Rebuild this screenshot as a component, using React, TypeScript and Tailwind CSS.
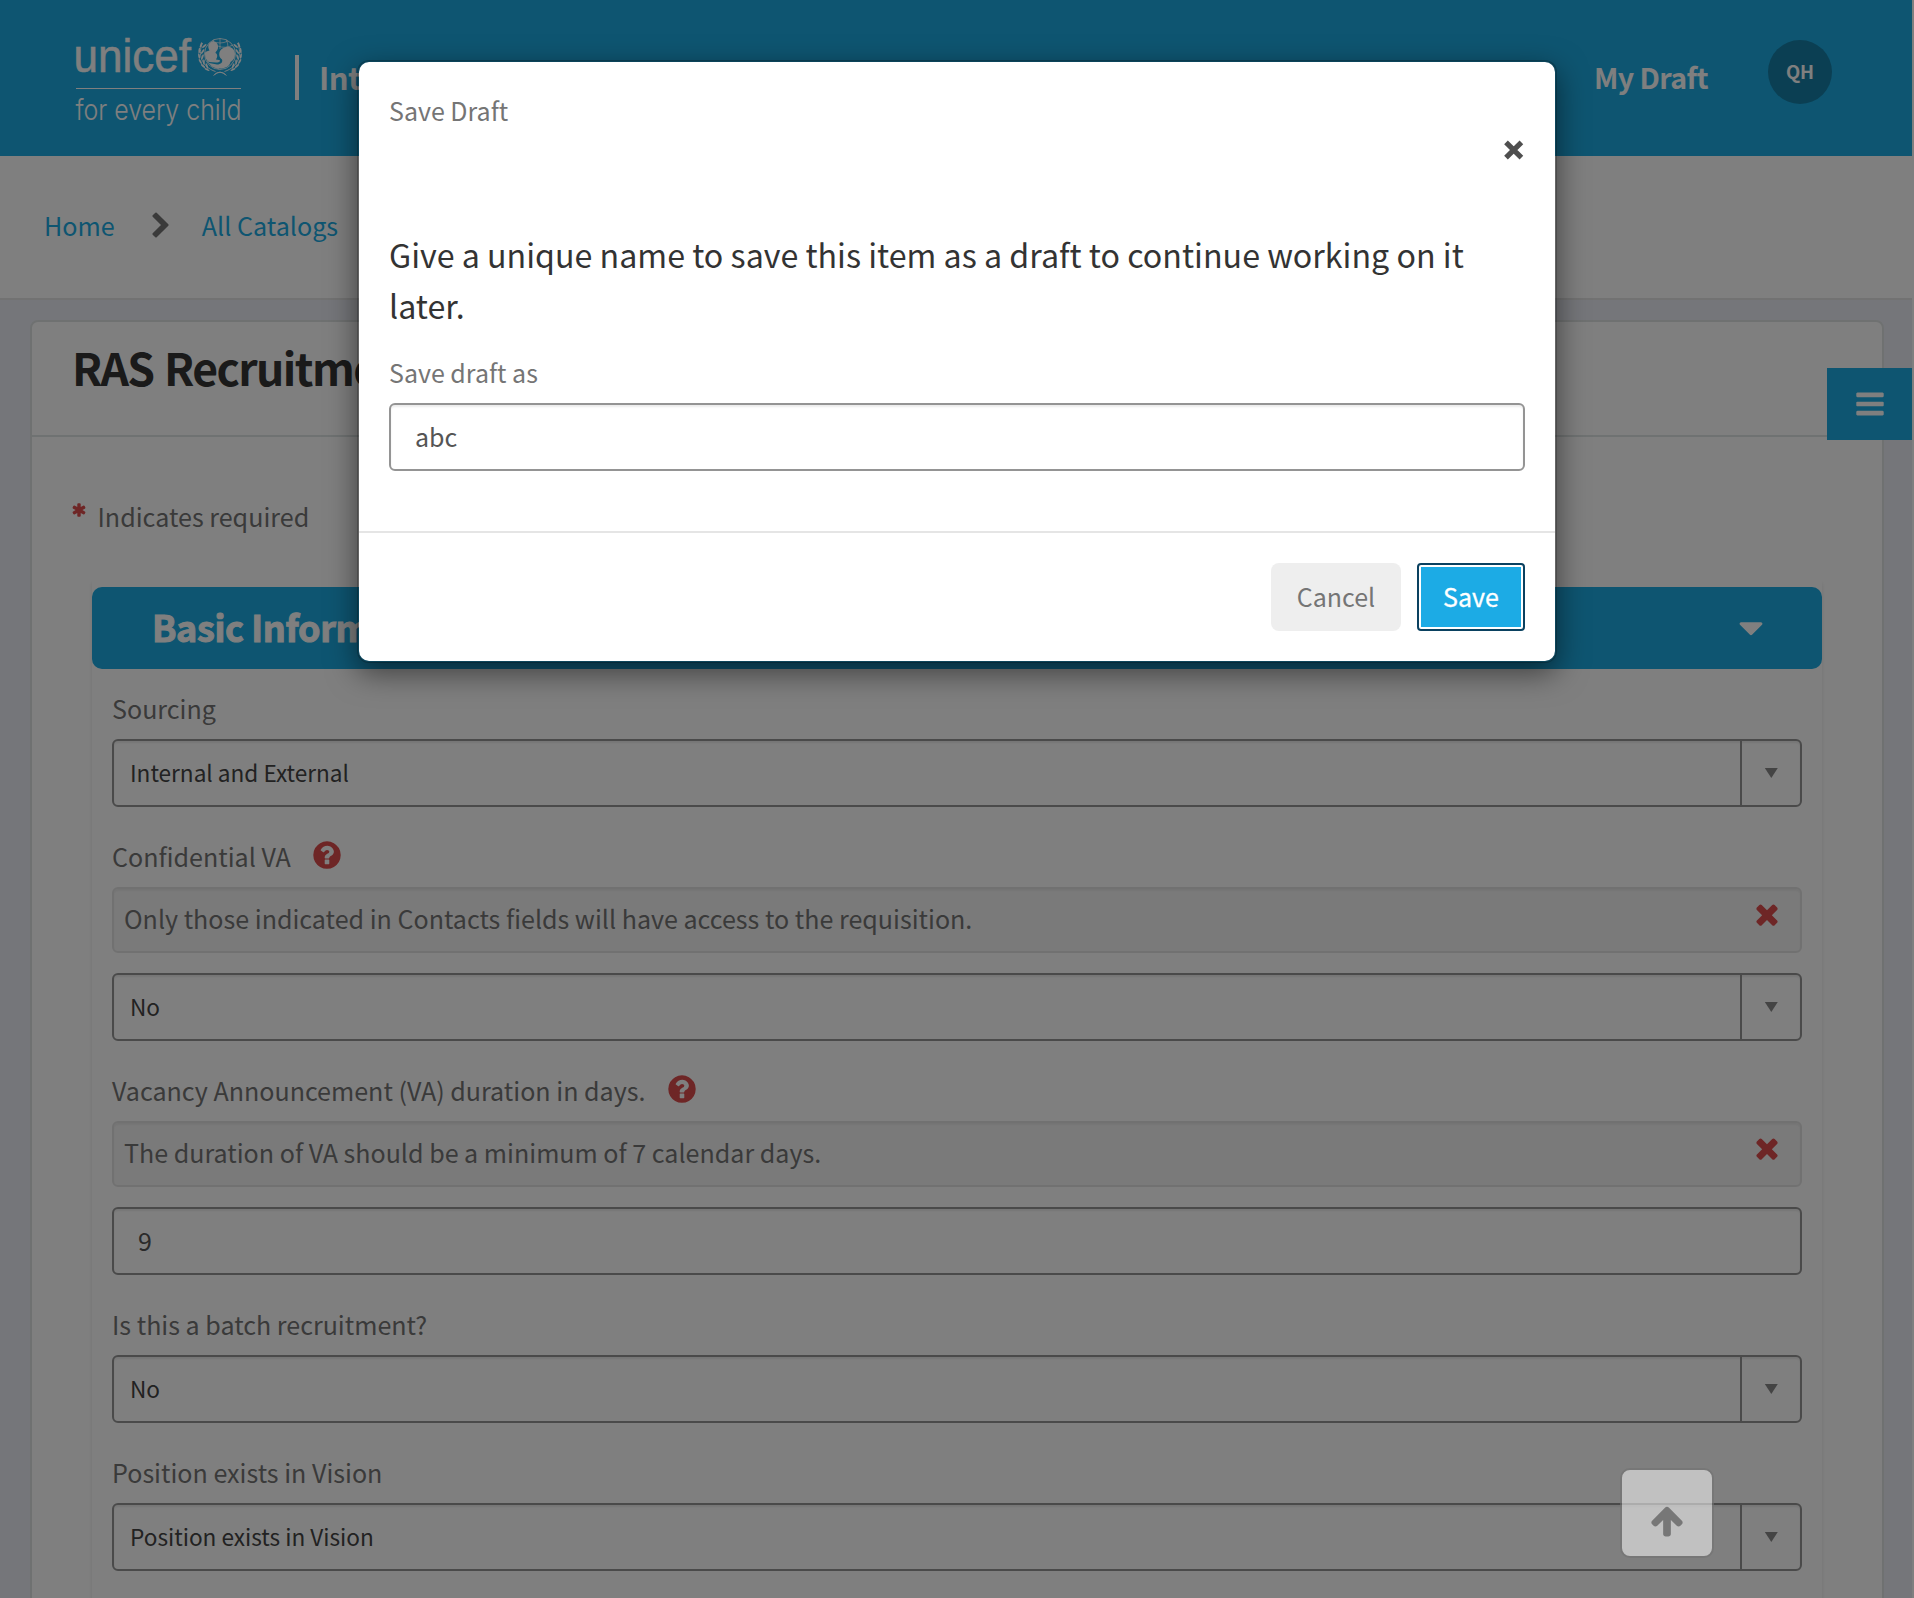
import React from "react";

const PATHS = {
  times:
    "M1490 1322q0 40-28 68l-136 136q-28 28-68 28t-68-28l-294-294-294 294q-28 28-68 28t-68-28l-136-136q-28-28-28-68t28-68l294-294-294-294q-28-28-28-68t28-68l136-136q28-28 68-28t68 28l294 294 294-294q28-28 68-28t68 28l136 136q28 28 28 68t-28 68l-294 294 294 294q28 28 28 68z",
  question:
    "M1024 1376v-192q0-14-9-23t-23-9h-192q-14 0-23 9t-9 23v192q0 14 9 23t23 9h192q14 0 23-9t9-23zm256-672q0-88-55.5-163t-138.5-116-170-41q-243 0-371 213-15 24 8 42l132 100q7 6 19 6 16 0 25-12 53-68 86-92 34-24 86-24 48 0 85.5 26t37.5 59q0 38-20 61t-68 45q-63 28-115.5 86.5t-52.5 125.5v36q0 14 9 23t23 9h192q14 0 23-9t9-23q0-19 21.5-49.5t54.5-49.5q32-18 49-28.5t46-35 44.5-48 28-60.5 12.5-81zm384 192q0 209-103 385.5t-279.5 279.5-385.5 103-385.5-103-279.5-279.5-103-385.5 103-385.5 279.5-279.5 385.5-103 385.5 103 279.5 279.5 103 385.5z",
  bars: "M1664 1344v128q0 26-19 45t-45 19h-1408q-26 0-45-19t-19-45v-128q0-26 19-45t45-19h1408q26 0 45 19t19 45zm0-512v128q0 26-19 45t-45 19h-1408q-26 0-45-19t-19-45v-128q0-26 19-45t45-19h1408q26 0 45 19t19 45zm0-512v128q0 26-19 45t-45 19h-1408q-26 0-45-19t-19-45v-128q0-26 19-45t45-19h1408q26 0 45 19t19 45z",
  caret:
    "M1408 704q0 26-19 45l-448 448q-19 19-45 19t-45-19l-448-448q-19-19-19-45t19-45 45-19h896q26 0 45 19t19 45z",
  chevron:
    "M1363 877l-742 742q-19 19-45 19t-45-19l-166-166q-19-19-19-45t19-45l531-531-531-531q-19-19-19-45t19-45l166-166q19-19 45-19t45 19l742 742q19 19 19 45t-19 45z",
  asterisk:
    "M1546 1050q46 26 59.5 77.5t-12.5 97.5l-64 110q-26 46-77.5 59.5t-97.5-12.5l-266-153v307q0 52-38 90t-90 38h-128q-52 0-90-38t-38-90v-307l-266 153q-46 26-97.5 12.5t-77.5-59.5l-64-110q-26-46-12.5-97.5t59.5-77.5l266-154-266-154q-46-26-59.5-77.5t12.5-97.5l64-110q26-46 77.5-59.5t97.5 12.5l266 153v-307q0-52 38-90t90-38h128q52 0 90 38t38 90v307l266-153q46-26 97.5-12.5t77.5 59.5l64 110q26 46 12.5 97.5t-59.5 77.5l-266 154z",
  arrowUp:
    "M1675 971q0 51-37 90l-75 75q-38 38-91 38-54 0-90-38l-294-293v704q0 52-37.5 84.5t-90.5 32.5h-128q-53 0-90.5-32.5t-37.5-84.5v-704l-294 293q-36 38-90 38t-90-38l-75-75q-38-38-38-90 0-53 38-91l651-651q35-37 90-37 54 0 91 37l651 651q37 39 37 91z",
};

function Icon({ name, className }: { name: keyof typeof PATHS; className: string }) {
  return (
    <svg viewBox="0 0 1792 1792" fill="currentColor" className={`shrink-0 ${className}`}>
      <path d={PATHS[name]} />
    </svg>
  );
}

function Logo() {
  const leaves = [
    [3.5, 9, 20], [1.8, 14.5, 5], [1.6, 20, -10], [2.8, 25.5, -30], [5.6, 30, -48], [9.5, 33.5, -62],
    [6.8, 10, 50], [5.2, 15.5, 35], [5, 21, 20], [6.4, 26, 0], [9.4, 30, -20],
  ];
  return (
    <svg width="168" height="94" viewBox="0 0 168 94" className="shrink-0 overflow-visible text-white" fill="currentColor">
      <text x="-2.500" y="36" fontFamily="Liberation Sans, Arial, sans-serif" fontSize="46" textLength="117.500" lengthAdjust="spacingAndGlyphs" stroke="currentColor" strokeWidth=".5">
        unicef
      </text>
      <g transform="translate(121 0)">
        {[1, -1].map((s) => (
          <g key={s} transform={s === 1 ? "translate(0.5 0)" : "translate(45.5 0) scale(-1 1)"}>
            {leaves.map(([x, y, r]) => (
              <ellipse key={`${x}-${y}`} cx={x} cy={y} rx=".9" ry="2.800" transform={`rotate(${r} ${x} ${y})`} />
            ))}
            <path d="M5 7C0 18 4 31 18 35.500M28 38.500Q22 33.500 16 39.500" fill="none" stroke="currentColor" strokeWidth=".9" />
          </g>
        ))}
        <circle cx="23" cy="18" r="15.500" fill="none" stroke="currentColor" strokeWidth=".8" />
        <path
          d="M23 2.500V13M15 5Q23 9 31 5M21 10Q28 13 36 9M17 3.500Q14 10 15 14M29 3.500Q31 7 31 11M8 18H14M10 25Q14 31 22 33"
          fill="none"
          stroke="currentColor"
          strokeWidth=".7"
        />
        <path d="M16 5.500C20 5.500 21.500 8.500 21 12C20.500 15 18.500 15.500 18.500 17C21 18.500 20.500 21 19 23.500L22 24C24 24.500 23 26.500 19 26.500L12 26C8.500 24 8 20 8 17C8 15.500 10.500 15 12.500 14.500C10 10 11.500 6 16 5.500Z" />
        <path d="M29 11C34 10 38 13.500 38 18C38 22 36 24.500 33.500 26C33 30 28 33 21 32.500C17 32 14 30 12 27L20 28.500C24 28.500 26 26 25 23.500C20 20 22 12 29 11Z" />
      </g>
      <rect x="0" y="52" width="165" height="1" />
      <text x="-0.500" y="84" fontFamily="Inter, sans-serif" fontWeight="300" fontSize="28.500" textLength="166" lengthAdjust="spacingAndGlyphs">
        for every child
      </text>
    </svg>
  );
}

function Label({ text, help }: { text: string; help?: boolean }) {
  return (
    <div className="flex h-[51px] items-start text-[25.070px] leading-10 text-[#757575]">
      <span>{text}</span>
      {help && <Icon name="question" className="ml-[20.500px] mt-[3px] size-8 text-[#dc4c4c]" />}
    </div>
  );
}

function Notice({ text }: { text: string }) {
  return (
    <div className="mb-5 flex h-[66px] items-start justify-between rounded-md border-2 border-[#e3e3e3] bg-[#f5f5f5] pl-[10px] pr-[17px] pt-[9px] text-[25.070px] leading-10 text-[#757575] shadow-[inset_0_2px_2px_rgba(0,0,0,0.05)]">
      <span>{text}</span>
      <Icon name="times" className="size-8 text-[#dc4c4c]" />
    </div>
  );
}

function Select({ value }: { value: string }) {
  return (
    <div className="flex h-[68px] rounded-md border-2 border-[#949494] text-[22.600px] leading-[63px] text-[#444] shadow-[inset_0_2px_2px_rgba(0,0,0,0.075)]">
      <div className="h-16 flex-1 pl-[16px]">{value}</div>
      <div className="flex w-[60px] justify-center border-l-2 border-[#949494] pt-[27px]">
        <svg width="14" height="10" viewBox="0 0 14 10" fill="#888">
          <path d="M.8 0h13L7.300 10z" />
        </svg>
      </div>
    </div>
  );
}

export default function App() {
  return (
    <div className="relative h-[1598px] w-[1914px] overflow-hidden bg-white font-['Noto_Sans_CJK_SC',sans-serif]">
      <div className="w-[1912px] bg-[#ebedf5]">
        <header className="flex h-[156px] items-start bg-[#1cabe2] text-white">
          <div className="ml-[76px] mt-[36px]">
            <Logo />
          </div>
          <div className="ml-[51px] mt-[55px] h-[45px] w-1 bg-white" />
          <div className="ml-[20px] mt-[52px] text-[31px] font-bold leading-[50px] tracking-[-0.5px]">Internal Recruitment</div>
          <div className="ml-auto mr-[60px] mt-[52px] text-[28.600px] font-bold leading-[50px] tracking-[-0.6px]">My Draft</div>
          <div className="mr-[80px] mt-10 flex size-16 items-center justify-center rounded-full bg-[#167ea6] text-[18.500px] font-bold">
            <span>QH</span>
          </div>
        </header>

        <nav className="flex h-[144px] items-start border-b-2 border-[#e4e4e4] bg-white pl-[44px] pt-[49px] text-[25.150px] leading-10 text-[#1cabe2]">
          <span>Home</span>
          <Icon name="chevron" className="ml-[32px] mt-[6.500px] size-7 text-[#757575]" />
          <span className="ml-[27px]">All Catalogs</span>
        </nav>

        <main className="mx-[30px] mr-[28px] mt-5 h-[1400px] rounded-lg border-2 border-[#dfe3e3] bg-white">
          <div className="h-[115px] border-b-2 border-[#dfe5e5] pl-[40px] pt-[8px] text-[44.500px] font-bold leading-[74px] tracking-[-1.6px] text-[#353535] [word-spacing:2px]">
            RAS Recruitment
          </div>
          <div className="flex h-[140px] items-start pl-[39px] pt-[59px] text-[25.100px] leading-10 text-[#757575]">
            <Icon name="asterisk" className="mt-[6px] size-4 text-[#dc4c4c]" />
            <span className="ml-[10.500px]">Indicates required</span>
          </div>
          <section className="ml-[60px] w-[1730px] pt-[10px] shadow-[0_6px_4px_rgba(0,0,0,0.1)]">
            <div className="flex h-[82px] items-center justify-between rounded-[10px] bg-[#1cabe2] pl-[60px] pr-[51px] text-[36px] font-bold leading-[50px] text-white">
              <span className="pb-[4px] tracking-[-0.4px] [-webkit-text-stroke:1px_white]">Basic Information</span>
              <Icon name="caret" className="size-10" />
            </div>
            <div className="flex flex-col gap-[29px] px-5 pb-10 pt-[19px]">
              <div>
                <Label text="Sourcing" />
                <Select value="Internal and External" />
              </div>
              <div>
                <Label text="Confidential VA" help />
                <Notice text="Only those indicated in Contacts fields will have access to the requisition." />
                <Select value="No" />
              </div>
              <div>
                <Label text="Vacancy Announcement (VA) duration in days." help />
                <Notice text="The duration of VA should be a minimum of 7 calendar days." />
                <div className="h-[68px] rounded-md border-2 border-[#949494] pl-[24px] text-[25px] leading-[62px] text-[#555] shadow-[inset_0_2px_2px_rgba(0,0,0,0.075)]">
                  9
                </div>
              </div>
              <div>
                <Label text="Is this a batch recruitment?" />
                <Select value="No" />
              </div>
              <div>
                <Label text="Position exists in Vision" />
                <Select value="Position exists in Vision" />
              </div>
            </div>
          </section>
        </main>
      </div>

      <button className="absolute left-[1827px] top-[368px] flex h-[72px] w-[85px] items-center justify-center bg-[#1cabe2] text-white">
        <Icon name="bars" className="size-8" />
      </button>

      <div className="absolute inset-0 bg-black/50" />

      <button className="absolute left-[1620px] top-[1468px] flex h-[90px] w-[94px] items-end justify-center rounded-[10px] border-2 border-[#737373] bg-[#eee] pb-[17px] text-[#737373] opacity-60">
        <Icon name="arrowUp" className="size-9" />
      </button>

      <div className="absolute left-[357px] top-[60px] h-[603px] w-[1200px] rounded-xl border-2 border-black/20 bg-white bg-clip-padding shadow-[0_10px_30px_rgba(0,0,0,0.5)]">
        <div className="flex h-[118px] justify-between pl-[30px] pr-[31px] text-[25px] leading-10 text-[#757575]">
          <span className="mt-[28px]">Save Draft</span>
          <svg width="20" height="20" viewBox="0 0 20 20" className="mt-[78px] shrink-0" fill="none" stroke="#4f4f4f" strokeWidth="5.200">
            <path d="M2 2.300L17.400 17.700M17.400 2.300L2 17.700" />
          </svg>
        </div>
        <div className="h-[353px] border-b-2 border-[#e5e5e5] px-[30px] pt-[49px]">
          <p className="text-[32.200px] leading-[51px] text-[#333]">
            Give a unique name to save this item as a draft to continue working on it later.
          </p>
          <div className="mt-[21px] h-[51px] text-[25px] leading-10 text-[#757575]">Save draft as</div>
          <div className="h-[68px] rounded-md border-2 border-[#949494] pl-[24px] text-[25px] leading-[62px] text-[#555] shadow-[inset_0_2px_2px_rgba(0,0,0,0.075)]">
            abc
          </div>
        </div>
        <div className="flex justify-end gap-4 pr-[30px] pt-[30px] text-[25px]">
          <button className="h-[68px] w-[130px] rounded-lg bg-[#eee] text-[#757575]">Cancel</button>
          <button className="h-[68px] w-[108px] rounded-[4px] border-2 border-[#0a4160] bg-white p-[2px] text-white">
            <span className="flex size-full items-center justify-center bg-[#1cabe5] [-webkit-text-stroke:0.3px_white]">Save</span>
          </button>
        </div>
      </div>
    </div>
  );
}
